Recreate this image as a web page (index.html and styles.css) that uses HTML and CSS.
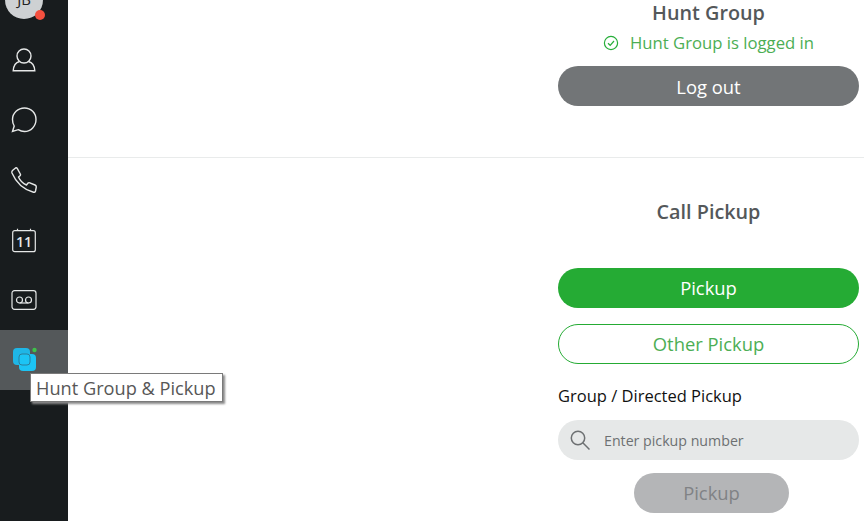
FILE: index.html
```html
<!DOCTYPE html>
<html>
<head>
    <link rel="stylesheet" href="styles.css">
</head>
<body>
    <nav class="sidebar">
        <div class="avatar-slot">
            <div class="avatar">JB</div>
            <span class="avatar-dot"></span>
        </div>
        <a class="nav-item">
            <svg width="26" height="26" viewBox="0 0 26 26" fill="none" stroke="#e6e8e8" stroke-width="1.4">
                <circle cx="13" cy="9" r="7"/>
                <path d="M8.500 14.500C4.500 15.500 2.500 19 2.200 23.800H23.800C23.500 19 21.500 15.500 17.500 14.500"/>
            </svg>
        </a>
        <a class="nav-item">
            <svg width="26" height="26" viewBox="0 0 26 26" fill="none" stroke="#e6e8e8" stroke-width="1.4">
                <path d="M13.500 1C20 1 25 6 25 12.500S20 24.500 13.500 24.500C11 24.500 9 23.800 7.200 22.700L1.500 24.500L3.200 19C2 17 1.500 15 1.500 12.500C1.500 6 7 1 13.500 1Z"/>
            </svg>
        </a>
        <a class="nav-item">
            <svg width="26" height="26" viewBox="0 0 26 26" fill="none" stroke="#e6e8e8" stroke-width="1.4" stroke-linejoin="round">
                <path d="M1.500 3.500L4.500 1C5.500.5 6 1 6.500 1.800L9.300 7C9.700 7.800 9.500 8.500 8.800 9L7.500 10C9 13.500 12 16.500 15.500 18L16.800 16.300C17.300 15.700 18 15.500 18.800 15.800L24 18C25 18.500 25.500 19.200 25.200 20.500L24.500 24C24.200 25 23.500 25.500 22.500 25.200C12.500 22.500 5 15.500 1 6C.7 5 .8 4.200 1.500 3.500Z"/>
            </svg>
        </a>
        <a class="nav-item">
            <svg width="26" height="26" viewBox="0 0 26 26" fill="none" stroke="#e6e8e8" stroke-width="1.200">
                <rect x="1.700" y="3.700" width="22.600" height="21" rx="2"/>
                <path d="M6.500 1.800V3.700M19.500 1.800V3.700"/>
                <text class="cal-day" x="13" y="19.500" text-anchor="middle">11</text>
            </svg>
        </a>
        <a class="nav-item">
            <svg width="26" height="22" viewBox="0 0 26 22" fill="none" stroke="#e6e8e8" stroke-width="1.200">
                <rect x="1" y="1.700" width="24" height="18.600" rx="2.500"/>
                <circle cx="8.500" cy="11" r="3"/>
                <circle cx="17.500" cy="11" r="3"/>
                <path d="M8.500 14H17.500"/>
            </svg>
        </a>
        <a class="nav-item active">
            <svg width="26" height="26" viewBox="0 0 26 26">
                <rect x="2" y="1" width="17" height="17" rx="4" fill="#1fb6e6"/>
                <rect x="8" y="7" width="17" height="17" rx="4" fill="#1cc4f4"/>
                <rect x="8" y="7" width="11" height="11" rx="3" fill="#1cc4f4" stroke="#2b7f9c" stroke-width="1"/>
                <circle cx="23.500" cy="3" r="2.200" fill="#3fc24a"/>
            </svg>
        </a>
    </nav>

    <main class="content">
        <section class="panel panel-top">
            <div class="column">
                <h2 class="title">Hunt Group</h2>
                <div class="status">
                    <svg width="16" height="16" viewBox="0 0 16 16" fill="none" stroke="#27ae39" stroke-width="1.200">
                        <circle cx="8" cy="8" r="6.600"/>
                        <path d="M5 8.200L7.200 10.300L11 6"/>
                    </svg>
                    <span class="status-text">Hunt Group is logged in</span>
                </div>
                <button class="btn btn-grey">Log out</button>
            </div>
        </section>

        <section class="panel panel-pickup">
            <div class="column">
                <h2 class="title title-pickup">Call Pickup</h2>
                <button class="btn btn-green">Pickup</button>
                <button class="btn btn-outline">Other Pickup</button>
                <label class="field-label">Group / Directed Pickup</label>
                <div class="search">
                    <svg width="22" height="22" viewBox="0 0 22 22" fill="none" stroke="#6d7072" stroke-width="1.500">
                        <circle cx="9" cy="9" r="6.700"/>
                        <path d="M13.800 13.800L20.500 20.500"/>
                    </svg>
                    <span class="placeholder">Enter pickup number</span>
                </div>
                <button class="btn btn-disabled">Pickup</button>
            </div>
        </section>
    </main>

    <div class="tooltip">Hunt Group &amp; Pickup</div>
</body>
</html>
```

FILE: styles.css
```css
html, body {
    height: 100%;
}

body {
    margin: 0;
    display: flex;
    overflow: hidden;
    background: #fff;
    font-family: "Open Sans", "Noto Sans", sans-serif;
}

.sidebar {
    width: 68px;
    flex-shrink: 0;
    background: #181c1e;
}

.avatar-slot {
    height: 30px;
    position: relative;
    overflow: hidden;
}

.avatar {
    position: absolute;
    left: 5px;
    top: -19px;
    width: 38px;
    height: 38px;
    border-radius: 50%;
    background: #ced1d3;
    color: #222;
    font-size: 15px;
    line-height: 36px;
    text-align: center;
}

.avatar-dot {
    position: absolute;
    left: 35px;
    top: 10px;
    width: 10px;
    height: 10px;
    border-radius: 50%;
    background: #f4503f;
}

.nav-item {
    height: 60px;
    display: flex;
    align-items: center;
    justify-content: center;
    padding-right: 20px;
    box-sizing: border-box;
}

.nav-item.active {
    background: #54585a;
}

.cal-day {
    fill: #e6e8e8;
    stroke: none;
    font-size: 14px;
    font-weight: 600;
}

.content {
    flex: 1;
    min-width: 0;
}

.panel {
    display: flex;
    box-sizing: border-box;
    padding-left: 490px;
}

.panel-top {
    height: 158px;
    border-bottom: 1px solid #e9ebeb;
}

.column {
    width: 301px;
    display: flex;
    flex-direction: column;
    align-items: center;
}

.title {
    margin: 0;
    font-size: 19.800px;
    line-height: 26px;
    font-weight: 600;
    color: #54585a;
}

.title-pickup {
    margin-top: 41px;
    margin-bottom: 43px;
}

.status {
    display: flex;
    align-items: center;
    gap: 11px;
    margin-top: 5px;
    height: 24px;
    font-size: 16.700px;
    color: #4cae54;
}

.status-text {
    padding-bottom: 2px;
}

.btn {
    border: none;
    width: 100%;
    height: 40px;
    border-radius: 20px;
    font-family: inherit;
    font-size: 18.400px;
    padding: 0;
}

.btn-grey {
    margin-top: 11px;
    background: #727577;
    color: #fff;
}

.btn-green {
    padding-bottom: 2px;
    background: #25ab34;
    color: #fff;
}

.btn-outline {
    margin-top: 16px;
    padding-bottom: 2px;
    background: #fff;
    border: 1px solid #25ab34;
    color: #4cae54;
}

.btn-disabled {
    margin-top: 13px;
    margin-left: 6px;
    padding-bottom: 2px;
    width: 155px;
    background: #b4b5b7;
    color: #808285;
}

.field-label {
    align-self: flex-start;
    margin-top: 20px;
    font-size: 16.500px;
    line-height: 24px;
    color: #111;
}

.search {
    margin-top: 12px;
    width: 100%;
    height: 40px;
    box-sizing: border-box;
    border-radius: 20px;
    background: #e6e8e8;
    display: flex;
    align-items: center;
    gap: 13px;
    padding-left: 11px;
}

.placeholder {
    font-size: 14.200px;
    color: #6d7072;
}

.tooltip {
    position: absolute;
    left: 30px;
    top: 373px;
    padding: 0 5px;
    height: 29px;
    line-height: 29px;
    box-sizing: border-box;
    width: 193px;
    white-space: nowrap;
    background: #fff;
    border: 1px solid #7a7a7a;
    box-shadow: 2px 2px 2px #8a8a8a;
    font-size: 18.200px;
    color: #575757;
}
```
